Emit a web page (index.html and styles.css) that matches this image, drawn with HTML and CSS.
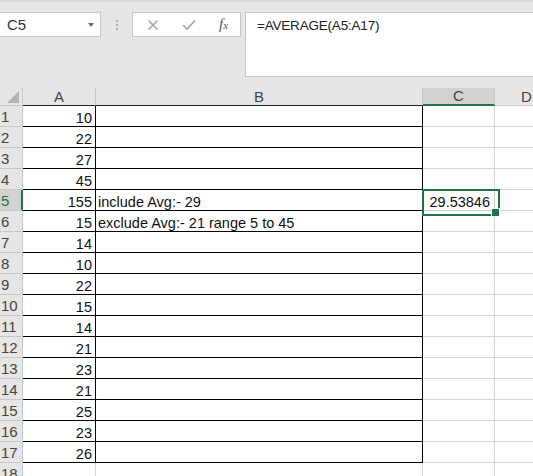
FILE: index.html
```html
<!DOCTYPE html>
<html>
<head>
<meta charset="utf-8">
<link rel="stylesheet" href="styles.css">
</head>
<body>
<div class="app">
  <div class="bar">
    <div class="namebox"><span class="ref">C5</span><span class="caret"></span></div>
    <div class="dots"><i></i><i></i><i></i></div>
    <div class="fxbox">
      <svg class="ico" width="12" height="12" viewBox="0 0 12 12"><path d="M1.5 1.5 L10.5 10.5 M10.5 1.5 L1.5 10.5" stroke="#a6a6a6" stroke-width="1.6" fill="none"/></svg>
      <svg class="ico chk" width="14" height="12" viewBox="0 0 14 12"><path d="M1 6 L5 10 L13 1.5" stroke="#a6a6a6" stroke-width="1.6" fill="none"/></svg>
      <span class="fx">f<span class="fxx">x</span></span>
    </div>
    <div class="formula">=AVERAGE(A5:A17)</div>
  </div>
  <div class="sheet">
    <div class="h corner"><span class="tri"></span></div>
    <div class="h col bkb">A</div>
    <div class="h col bkb">B</div>
    <div class="h col sel">C</div>
    <div class="h col dcol">D</div>

    <div class="h rh">1</div><div class="c bk num">10</div><div class="c bk"></div><div class="c"></div><div class="c"></div>
    <div class="h rh">2</div><div class="c bk num">22</div><div class="c bk"></div><div class="c"></div><div class="c"></div>
    <div class="h rh">3</div><div class="c bk num">27</div><div class="c bk"></div><div class="c"></div><div class="c"></div>
    <div class="h rh">4</div><div class="c bk num">45</div><div class="c bk"></div><div class="c"></div><div class="c"></div>
    <div class="h rh rsel">5</div><div class="c bk num">155</div><div class="c bk txt">include Avg:- 29</div><div class="c num active">29.53846</div><div class="c"></div>
    <div class="h rh">6</div><div class="c bk num">15</div><div class="c bk txt">exclude Avg:- 21 range 5 to 45</div><div class="c"></div><div class="c"></div>
    <div class="h rh">7</div><div class="c bk num">14</div><div class="c bk"></div><div class="c"></div><div class="c"></div>
    <div class="h rh">8</div><div class="c bk num">10</div><div class="c bk"></div><div class="c"></div><div class="c"></div>
    <div class="h rh">9</div><div class="c bk num">22</div><div class="c bk"></div><div class="c"></div><div class="c"></div>
    <div class="h rh">10</div><div class="c bk num">15</div><div class="c bk"></div><div class="c"></div><div class="c"></div>
    <div class="h rh">11</div><div class="c bk num">14</div><div class="c bk"></div><div class="c"></div><div class="c"></div>
    <div class="h rh">12</div><div class="c bk num">21</div><div class="c bk"></div><div class="c"></div><div class="c"></div>
    <div class="h rh">13</div><div class="c bk num">23</div><div class="c bk"></div><div class="c"></div><div class="c"></div>
    <div class="h rh">14</div><div class="c bk num">21</div><div class="c bk"></div><div class="c"></div><div class="c"></div>
    <div class="h rh">15</div><div class="c bk num">25</div><div class="c bk"></div><div class="c"></div><div class="c"></div>
    <div class="h rh">16</div><div class="c bk num">23</div><div class="c bk"></div><div class="c"></div><div class="c"></div>
    <div class="h rh">17</div><div class="c bk num">26</div><div class="c bk"></div><div class="c"></div><div class="c"></div>
    <div class="h rh">18</div><div class="c"></div><div class="c"></div><div class="c"></div><div class="c"></div>
  </div>
</div>
</body>
</html>
```

FILE: styles.css
```css
* { box-sizing: border-box; }
html, body { margin: 0; padding: 0; background: #ffffff; }
body { width: 533px; height: 476px; overflow: hidden; font-family: "Liberation Sans", Arial, sans-serif; }
.app { width: 533px; height: 476px; overflow: hidden; }

.bar {
  height: 88px;
  background: #e6e6e6;
  border-top: 2px solid #dadada;
  padding-top: 10px;
  display: flex;
  align-items: flex-start;
}
.namebox {
  width: 101px;
  height: 25px;
  background: #fff;
  border: 1px solid #c6c6c6;
  border-left: none;
  display: flex;
  align-items: center;
  justify-content: space-between;
  padding: 0 6px 0 7px;
}
.ref { font-size: 15px; color: #333; }
.caret {
  width: 0; height: 0;
  border-left: 3.5px solid transparent;
  border-right: 3.5px solid transparent;
  border-top: 4px solid #6a6a6a;
}
.dots {
  margin-left: 15px;
  height: 25px;
  width: 3px;
  display: flex;
  flex-direction: column;
  justify-content: center;
  gap: 2px;
}
.dots i { display: block; width: 2px; height: 2px; background: #b0b0b0; }
.fxbox {
  margin-left: 13px;
  width: 109px;
  height: 25px;
  background: #fff;
  border: 1px solid #c6c6c6;
  display: flex;
  align-items: center;
  padding-left: 14px;
}
.ico { display: block; }
.chk { margin-left: 23px; }
.fx {
  margin-left: 23px;
  font-family: "Liberation Serif", "Times New Roman", serif;
  font-style: italic;
  font-size: 15px;
  color: #555;
}
.fxx { font-size: 11px; }
.formula {
  margin-left: 4px;
  flex: 1;
  height: 65px;
  background: #fff;
  border: 1px solid #c6c6c6;
  border-right: none;
  padding: 5px 0 0 11px;
  font-size: 13.5px;
  letter-spacing: -0.2px;
  color: #222;
}

.sheet {
  width: 533px;
  overflow: hidden;
  display: grid;
  grid-template-columns: 23px 73px 327px 72px 64px;
  grid-template-rows: 18px repeat(18, 21px);
}
.h {
  background: #e6e6e6;
  color: #444;
  font-size: 15px;
  border-right: 1px solid #c8c8c8;
  border-bottom: 1px solid #c8c8c8;
}
.corner { position: relative; }
.tri {
  position: absolute;
  right: 3px;
  bottom: 2px;
  width: 12px;
  height: 12px;
  background: #b4b4b4;
  clip-path: polygon(100% 0, 100% 100%, 0 100%);
}
.col {
  display: flex;
  align-items: flex-end;
  justify-content: center;
  line-height: 16px;
}
.bkb { border-bottom-color: #222; }
.sel { background: #d2d2d2; border-bottom: 2px solid #217346; color: #444; }
.rh {
  display: flex;
  align-items: flex-end;
  padding-left: 1px;
  line-height: 16px;
  padding-bottom: 1px;
}
.rsel { background: #d2d2d2; color: #217346; border-right: 2px solid #217346; }

.c {
  border-right: 1px solid #d4d4d4;
  border-bottom: 1px solid #d4d4d4;
  font-size: 14.5px;
  line-height: 16px;
  color: #111;
  display: flex;
  align-items: flex-end;
  white-space: nowrap;
}
.bk { border-right-color: #000; border-bottom-color: #000; }
.num { justify-content: flex-end; padding-right: 3px; }
.txt { padding-left: 2px; }
.active { position: relative; padding-right: 4px; }
.active::before {
  content: "";
  position: absolute;
  left: -1px;
  top: -1px;
  width: 74px;
  height: 23px;
  border: 2px solid #217346;
}
.active::after {
  content: "";
  position: absolute;
  left: 68px;
  top: 18px;
  width: 7px;
  height: 7px;
  background: #217346;
  border: 1px solid #fff;
}
```
